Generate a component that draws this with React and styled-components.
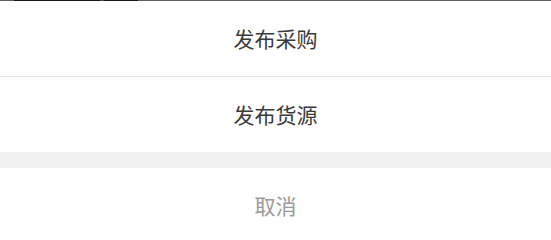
import React from "react";
import styled, { createGlobalStyle } from "styled-components";

const GlobalStyle = createGlobalStyle`
  html, body {
    margin: 0;
    padding: 0;
    background: #ffffff;
  }
  body {
    font-family: "Noto Sans CJK SC", "Noto Sans", sans-serif;
  }
`;

const Sheet = styled.div`
  width: 551px;
  display: flex;
  flex-direction: column;
  background: #ffffff;
`;

// backdrop bleeding through along the top edge
const Backdrop = styled.div`
  height: 1px;
  display: flex;
  background: #636363;
`;

const BackdropPart = styled.div`
  width: ${(p) => p.$w}px;
  background: ${(p) => p.$c};
`;

const Option = styled.button`
  height: 73px;
  border: 0;
  padding: 0 0 2px;
  margin: 0;
  background: #ffffff;
  display: flex;
  align-items: center;
  justify-content: center;
  font-family: inherit;
  font-size: 21px;
  color: ${(p) => (p.$muted ? "#9a9a9a" : "#3a3a3a")};
  border-bottom: ${(p) => (p.$divider ? "1px solid #e2e2e2" : "0")};
  box-sizing: content-box;
`;

const Spacer = styled.div`
  height: 16px;
  background: #f0f0f0;
`;

export default function App() {
  return (
    <>
      <GlobalStyle />
      <Sheet>
        <Backdrop>
          <BackdropPart $w={14} $c="#636363" />
          <BackdropPart $w={86} $c="#1b1712" />
          <BackdropPart $w={4} $c="#4a4a4a" />
          <BackdropPart $w={34} $c="#1b1712" />
        </Backdrop>
        <Option $divider>发布采购</Option>
        <Option>发布货源</Option>
        <Spacer />
        <Option $muted>取消</Option>
      </Sheet>
    </>
  );
}
